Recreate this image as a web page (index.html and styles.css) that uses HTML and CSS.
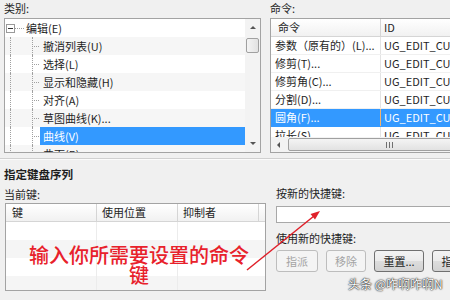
FILE: index.html
```html
<!DOCTYPE html>
<html lang="zh-CN">
<head>
    <meta charset="UTF-8">
    <meta name="viewport" content="width=device-width, initial-scale=1.0">
    <link rel="stylesheet" href="styles.css">
</head>
<body>

    <div class="top">
        <!-- category tree -->
        <div class="pane pane-cat">
            <div class="cap">类别:</div>
            <div class="box tree">
                <div class="tree-list">
                    <div class="node root"><span class="exp"><i></i></span><i class="hdot"></i><span class="lbl">编辑(E)</span></div>
                    <div class="node"><i class="v1"></i><i class="v2"></i><span class="lbl">撤消列表(U)</span></div>
                    <div class="node"><i class="v1"></i><i class="v2"></i><span class="lbl">选择(L)</span></div>
                    <div class="node"><i class="v1"></i><i class="v2"></i><span class="lbl">显示和隐藏(H)</span></div>
                    <div class="node"><i class="v1"></i><i class="v2"></i><span class="lbl">对齐(A)</span></div>
                    <div class="node"><i class="v1"></i><i class="v2"></i><span class="lbl">草图曲线(K)...</span></div>
                    <div class="node sel"><i class="v1"></i><i class="v2"></i><span class="lbl">曲线(V)</span></div>
                    <div class="node"><i class="v1"></i><i class="v2"></i><span class="lbl">曲面(R)</span></div>
                </div>
                <div class="vscroll">
                    <span class="arrow"><i class="tri-up"></i></span>
                    <span class="thumb"></span>
                    <span class="track"></span>
                    <span class="arrow"><i class="tri-down"></i></span>
                </div>
            </div>
        </div>

        <!-- command grid -->
        <div class="pane pane-cmd">
            <div class="cap">命令:</div>
            <div class="box grid">
                <div class="grow ghead"><span class="c1">命令</span><span class="c2">ID</span></div>
                <div class="grow"><span class="c1">参数（原有的）(L)...</span><span class="c2">UG_EDIT_CURVE_PARAMS</span></div>
                <div class="grow"><span class="c1">修剪(T)...</span><span class="c2">UG_EDIT_CURVE_TRIM</span></div>
                <div class="grow"><span class="c1">修剪角(C)...</span><span class="c2">UG_EDIT_CURVE_CORNER</span></div>
                <div class="grow"><span class="c1">分割(D)...</span><span class="c2">UG_EDIT_CURVE_DIVIDE</span></div>
                <div class="grow sel"><span class="c1">圆角(F)...</span><span class="c2">UG_EDIT_CURVE_FILLET</span></div>
                <div class="grow cut"><span class="c1">拉长(S)</span><span class="c2">UG_EDIT_CURVE_STRETCH</span></div>
                <div class="hscroll">
                    <span class="arrow"><i class="tri-left"></i></span>
                    <span class="hthumb"><i class="grip"></i></span>
                </div>
            </div>
        </div>
    </div>

    <div class="sep"></div>

    <div class="bottom">
        <div class="heading">指定键盘序列</div>
        <div class="cols">
            <div class="col-left">
                <div class="cap2">当前键:</div>
                <div class="box keys">
                    <div class="krow khead"><span class="k1">键</span><span class="k2">使用位置</span><span class="k3">抑制者</span></div>
                    <div class="krow"><span class="k1"></span><span class="k2"></span><span class="k3"></span></div>
                    <div class="krow"><span class="k1"></span><span class="k2"></span><span class="k3"></span></div>
                    <div class="krow"><span class="k1"></span><span class="k2"></span><span class="k3"></span></div>
                    <div class="krow"><span class="k1"></span><span class="k2"></span><span class="k3"></span></div>
                </div>
                <div class="note">输入你所需要设置的命令<br>键</div>
            </div>
            <div class="col-right">
                <div class="cap2">按新的快捷键:</div>
                <div class="field"></div>
                <div class="cap2 next">使用新的快捷键:</div>
                <div class="btns">
                    <span class="btn off w42">指派</span>
                    <span class="btn off w40">移除</span>
                    <span class="btn w50">重置...</span>
                    <span class="btn w50">指定...</span>
                </div>
            </div>
        </div>

        <svg class="pointer" viewBox="0 0 450 140" width="450" height="140">
            <line x1="247" y1="110" x2="314" y2="56" stroke="#e0202a" stroke-width="1.5"/>
            <polygon points="320,51 315,59.5 310.5,54" fill="#e0202a"/>
        </svg>
        <div class="mark">头条 @咋啊咋啊N</div>
    </div>

</body>
</html>
```

FILE: styles.css
```css
body {
    margin: 0;
    width: 450px;
    height: 300px;
    overflow: hidden;
    background-color: #f0f0f0;
    font-family: "Noto Sans CJK SC", "Noto Sans", sans-serif;
    font-size: 11px;
    color: #1e1e1e;
}

.top {
    display: flex;
    gap: 9px;
    padding-left: 4px;
    height: 158px;
}

.pane-cat {
    width: 257px;
    flex: none;
}

.pane-cmd {
    width: 200px;
    flex: none;
}

.cap {
    height: 18px;
    line-height: 16px;
}

.box {
    box-sizing: border-box;
    border: 1px solid #a3a3a3;
    background-color: #fff;
}

/* tree */
.tree {
    height: 135px;
    display: flex;
}

.tree-list {
    flex: 1;
    overflow: hidden;
}

.node {
    display: flex;
    height: 18px;
    line-height: 18px;
    white-space: nowrap;
}

.node:nth-child(even) {
    background-color: #f6f6f6;
}

.exp {
    flex: none;
    width: 9px;
    height: 9px;
    box-sizing: border-box;
    margin: 5px 0 0 1px;
    border: 1px solid #9a9a9a;
    background-color: #fff;
    display: flex;
    align-items: center;
    justify-content: center;
}

.exp i {
    width: 5px;
    height: 1px;
    background-color: #333;
}

.hdot {
    flex: none;
    width: 10px;
    background: linear-gradient(to right, #a0a0a0 50%, transparent 50%) 0 9px / 2px 1px repeat-x;
}

.v1 {
    flex: none;
    width: 22px;
    margin-left: 5px;
    box-sizing: border-box;
    border-left: 1px dotted #a0a0a0;
}

.v2 {
    flex: none;
    width: 8px;
    box-sizing: border-box;
    border-left: 1px dotted #a0a0a0;
    background: linear-gradient(to right, #a0a0a0 50%, transparent 50%) 1px 9px / 2px 1px repeat-x;
}

.lbl {
    flex: 1;
    padding-left: 3px;
}

.root .lbl {
    padding-left: 1px;
}

.node.sel .lbl {
    background-color: #3399ff;
    color: #fff;
}

/* scrollbars */
.vscroll {
    flex: none;
    width: 15px;
    display: flex;
    flex-direction: column;
    align-items: center;
    background-color: #f3f3f3;
}

.arrow {
    flex: none;
    width: 15px;
    height: 17px;
    display: flex;
    align-items: center;
    justify-content: center;
}

.tri-up {
    border-left: 3px solid transparent;
    border-right: 3px solid transparent;
    border-bottom: 3px solid #555;
}

.tri-down {
    border-left: 3px solid transparent;
    border-right: 3px solid transparent;
    border-top: 3px solid #555;
}

.tri-left {
    border-top: 3px solid transparent;
    border-bottom: 3px solid transparent;
    border-right: 3px solid #555;
}

.thumb {
    flex: none;
    width: 13px;
    height: 15px;
    margin-top: 2px;
    box-sizing: border-box;
    border: 1px solid #a0a0a0;
    border-radius: 2px;
    background: linear-gradient(to right, #f4f4f4, #e2e2e2);
}

.track {
    flex: 1;
}

/* command grid */
.grid {
    height: 135px;
    width: 200px;
    overflow: hidden;
}

.grow {
    display: flex;
    height: 18px;
    line-height: 17px;
    white-space: nowrap;
    box-sizing: border-box;
    border-bottom: 1px solid #f0f0f0;
}

.c1 {
    flex: none;
    width: 110px;
    box-sizing: border-box;
    padding-left: 4px;
    border-right: 1px solid #e3e3e3;
    overflow: hidden;
}

.c2 {
    padding-left: 3px;
}

.ghead {
    background: linear-gradient(#ffffff, #f1f1f1);
    border-bottom: 1px solid #d5d5d5;
}

.ghead .c1 {
    padding-left: 7px;
    border-right-color: #d5d5d5;
}

.grow.sel {
    background-color: #3399ff;
    color: #fff;
    border-bottom-color: #3399ff;
}

.grow.sel .c1 {
    border-right-color: #f2b36b;
}

.grow.cut {
    height: 10px;
    overflow: hidden;
    border-bottom: none;
}

.hscroll {
    height: 15px;
    display: flex;
    align-items: center;
    background-color: #f3f3f3;
}

.hthumb {
    flex: none;
    width: 202px;
    height: 13px;
    margin-left: 2px;
    box-sizing: border-box;
    border: 1px solid #a0a0a0;
    border-radius: 2px;
    background: linear-gradient(#f4f4f4, #e2e2e2);
    display: flex;
    align-items: center;
    justify-content: center;
}

.grip {
    width: 7px;
    height: 6px;
    background: repeating-linear-gradient(to right, #707070 0 1px, transparent 1px 3px);
}

/* bottom part */
.sep {
    height: 1px;
    background-color: #d0d0d0;
    border-bottom: 1px solid #fbfbfb;
}

.bottom {
    position: relative;
    height: 140px;
    box-sizing: border-box;
    padding: 6px 0 0 4px;
}

.heading {
    font-weight: bold;
    font-size: 11.5px;
    line-height: 16px;
}

.cols {
    display: flex;
    gap: 10px;
}

.col-left {
    position: relative;
    flex: none;
    width: 262px;
}

.col-right {
    flex: 1;
}

.cap2 {
    line-height: 16px;
}

.col-left .cap2 {
    margin-top: 4px;
}

.col-right .cap2 {
    margin-top: 3px;
}

.col-right .cap2.next {
    margin-top: 7px;
}

.keys {
    width: 261px;
    height: 88px;
    margin: 1px 0 0 1px;
    overflow: hidden;
}

.krow {
    display: flex;
    height: 18px;
    line-height: 17px;
}

.krow:nth-child(odd) {
    background-color: #f5f5f5;
}

.krow.khead {
    box-sizing: border-box;
    background: linear-gradient(#ffffff, #f1f1f1);
    border-bottom: 1px solid #d5d5d5;
}

.k1, .k2, .k3 {
    flex: none;
    box-sizing: border-box;
    border-right: 1px solid #ececec;
}

.k1 {
    width: 91px;
    padding-left: 6px;
}

.k2 {
    width: 81px;
    padding-left: 5px;
}

.k3 {
    width: 81px;
    padding-left: 5px;
    border-right-color: transparent;
}

.khead .k1, .khead .k2, .khead .k3 {
    border-right-color: #d5d5d5;
}

.field {
    width: 200px;
    height: 17px;
    margin-top: 5px;
    box-sizing: border-box;
    border: 1px solid #a8a8a8;
    background-color: #fff;
}

.btns {
    display: flex;
    gap: 8px;
    margin-top: 4px;
}

.btn {
    flex: none;
    height: 22px;
    line-height: 20px;
    box-sizing: border-box;
    text-align: center;
    border: 1px solid #707070;
    border-radius: 3px;
    background: linear-gradient(#f3f3f3, #ebebeb 50%, #dddddd 50%, #d2d2d2);
    overflow: hidden;
    white-space: nowrap;
}

.btn.off {
    border-color: #bdbdbd;
    color: #a3a3a3;
    background: #f4f4f4;
}

.w40 { width: 40px; }
.w42 { width: 42px; }
.w50 { width: 50px; }

/* annotation over the screenshot */
.note {
    position: absolute;
    left: 0;
    top: 63px;
    width: 270px;
    text-align: center;
    color: #e8212b;
    font-size: 20px;
    line-height: 20px;
    font-weight: 500;
}

.pointer {
    position: absolute;
    left: 0;
    top: 0;
}

.mark {
    position: absolute;
    left: 348px;
    top: 117px;
    color: #fff;
    font-size: 12px;
    line-height: 14px;
    text-shadow: 0 0 2px #000, 0 0 1px #000;
}
```
